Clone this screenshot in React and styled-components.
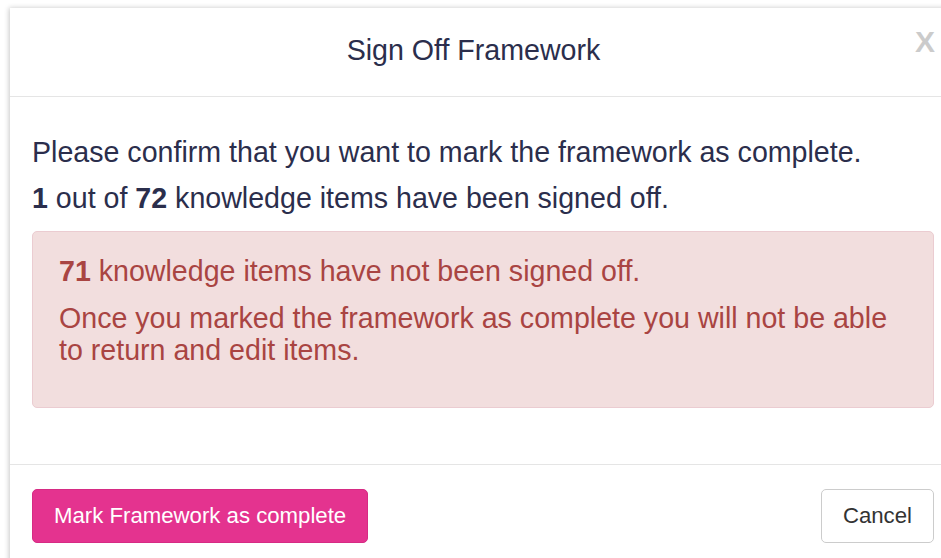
import React from 'react';
import styled, { createGlobalStyle } from 'styled-components';

const GlobalStyle = createGlobalStyle`
    html, body {
        margin: 0;
        padding: 0;
        background: #fff;
        overflow: hidden;
    }
    body {
        font-family: "Liberation Sans", Arial, sans-serif;
    }
`;

const Backdrop = styled.div`
    padding: 8px 0 0 10px;
    width: 941px;
    height: 558px;
    box-sizing: border-box;
    overflow: hidden;
`;

const Dialog = styled.div`
    width: 946px;
    background: #fff;
    box-shadow: -1px 0 5px rgba(0, 0, 0, 0.22);
    color: #2b2e4c;
    font-size: 28.6px;
    line-height: 32px;
`;

const Header = styled.div`
    display: flex;
    align-items: flex-start;
    padding: 26px 22px 30px;
    border-bottom: 1px solid #e5e5e5;
`;

const Title = styled.h4`
    flex: 1;
    margin: 0;
    text-align: center;
    font-weight: normal;
    font-size: 28.6px;
    line-height: 32px;
`;

const Close = styled.button`
    flex: none;
    margin-top: -8px;
    margin-right: -1px;
    padding: 0;
    border: 0;
    background: none;
    font-family: inherit;
    font-size: 30px;
    line-height: 31px;
    font-weight: bold;
    color: #000;
    opacity: 0.2;
    cursor: pointer;
`;

const Body = styled.div`
    padding: 39px 22px 56px;
`;

const Text = styled.p`
    margin: 0 0 ${(p) => p.$gap || 14}px;
`;

const Alert = styled.div`
    margin-top: 17px;
    padding: 23px 26px 26px;
    background: #f2dede;
    border: 1px solid #ebccd1;
    border-radius: 5px;
    color: #a94442;

    ${Text}:last-child {
        margin-bottom: 15px;
    }
`;

const Footer = styled.div`
    display: flex;
    justify-content: space-between;
    padding: 24px 22px 22px;
    border-top: 1px solid #e5e5e5;
`;

const Button = styled.button`
    height: 54px;
    padding: 0 21px;
    font-family: inherit;
    font-size: 22.2px;
    border-radius: 5px;
    cursor: pointer;
    border: 1px solid ${(p) => (p.$primary ? '#d62b84' : '#ccc')};
    background: ${(p) => (p.$primary ? '#e4338f' : '#fff')};
    color: ${(p) => (p.$primary ? '#fff' : '#333')};
`;

export default function App() {
    const signed = 1;
    const total = 72;

    return (
        <>
            <GlobalStyle />
            <Backdrop>
                <Dialog>
                    <Header>
                        <Title>Sign Off Framework</Title>
                        <Close>X</Close>
                    </Header>
                    <Body>
                        <Text>Please confirm that you want to mark the framework as complete.</Text>
                        <Text>
                            <b>{signed}</b> out of <b>{total}</b> knowledge items have been signed off.
                        </Text>
                        <Alert>
                            <Text $gap={15}>
                                <b>{total - signed}</b> knowledge items have not been signed off.
                            </Text>
                            <Text>
                                Once you marked the framework as complete you will not be able to return and edit items.
                            </Text>
                        </Alert>
                    </Body>
                    <Footer>
                        <Button $primary>Mark Framework as complete</Button>
                        <Button>Cancel</Button>
                    </Footer>
                </Dialog>
            </Backdrop>
        </>
    );
}
